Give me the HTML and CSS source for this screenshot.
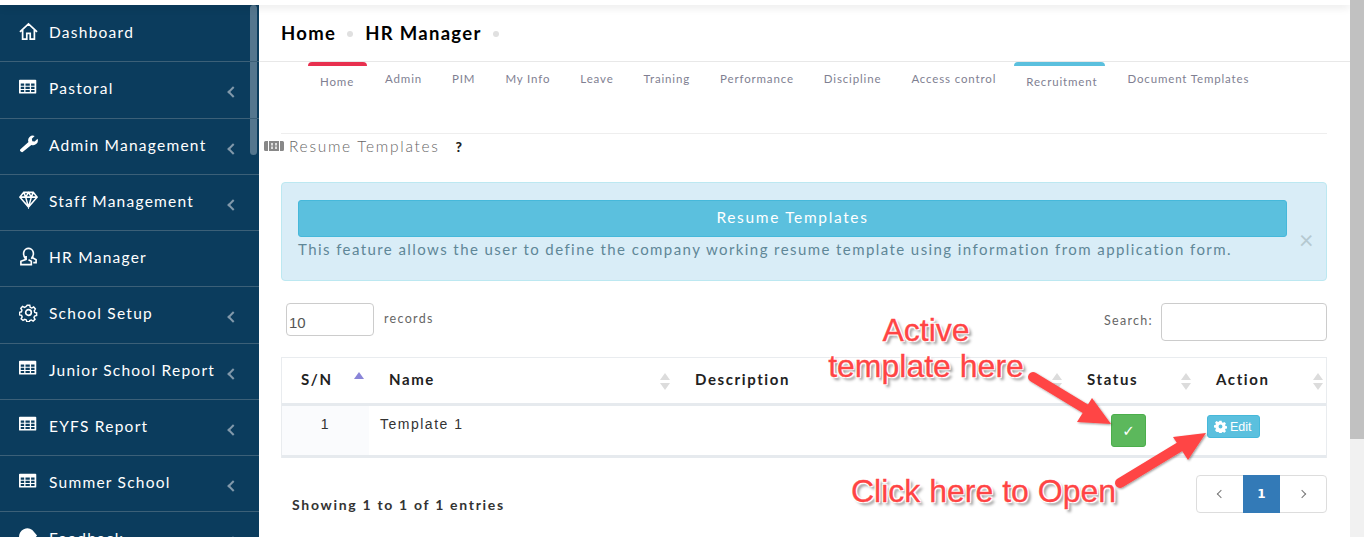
FILE: index.html
```html
<!DOCTYPE html>
<html lang="en">
<head>
<meta charset="utf-8">
<title>Resume Templates</title>
<link rel="stylesheet" href="styles.css">
</head>
<body>
<div class="page">
  <div class="topstrip"></div>
  <aside class="sidebar">
    <div class="thumb"></div>
    <a class="nav-item"><svg class="ico" viewBox="0 0 20 20"><path d="M1 10.500 10 2l9 8.500M3.800 8v10h4.400v-6h3.600v6h4.400V8" fill="none" stroke="#fff" stroke-width="1.800"/></svg><span>Dashboard</span></a>
    <a class="nav-item"><svg class="ico" viewBox="0 0 22 22"><use href="#grid"/></svg><span>Pastoral</span><i class="chev"></i></a>
    <a class="nav-item"><svg class="ico" viewBox="0 0 20 20"><path d="M2 18.500a1.500 1.500 0 0 1-.5-2.500l8.500-7.500a5 5 0 0 1 6.500-6.500l-3 3 .5 2.500 2.500.5 3-3a5 5 0 0 1-6.500 6.500L4.500 18.500a1.700 1.700 0 0 1-2.500 0z" fill="#fff"/></svg><span>Admin Management</span><i class="chev"></i></a>
    <a class="nav-item"><svg class="ico" viewBox="0 0 20 20"><path d="M5 2.500h10l4 5-9 10.500L1 7.500zM1 7.500h18M7 7.500 10 18l3-10.500M5 2.500l2 5 3-5 3 5 2-5" fill="none" stroke="#fff" stroke-width="1.600"/></svg><span>Staff Management</span><i class="chev"></i></a>
    <a class="nav-item"><svg class="ico" viewBox="0 0 20 20"><path d="M7 12.500C5 10 4.500 8 5 5.500 5.500 3 8 1.500 10 1.500s4.500 1.500 5 4c.5 2.500 0 4.500-2 7M7.500 9.500v3.500L2 15v3.500h11V15l-3-1.500M13 10.500l5 3v3h-3" fill="none" stroke="#fff" stroke-width="1.700"/></svg><span>HR Manager</span></a>
    <a class="nav-item"><svg class="ico" viewBox="0 0 20 20"><circle cx="10" cy="10" r="3" fill="none" stroke="#fff" stroke-width="1.700"/><path d="M8.500 1.500h3l.5 2.500 1.700.8 2.300-1.200 2 2.200-1.300 2.200.6 1.900 2.200.6v3l-2.400.6-.7 1.700 1.200 2.200-2.200 2-2.100-1.300-1.800.7-.5 1.500h-3l-.5-2.200-1.800-.7-2.100 1.300-2.200-2 1.200-2.200-.7-1.700-2.400-.6v-3l2.200-.6.600-1.900-1.300-2.200 2-2.200 2.300 1.200 1.700-.8z" transform="translate(1 1) scale(.9)" fill="none" stroke="#fff" stroke-width="1.700"/></svg><span>School Setup</span><i class="chev"></i></a>
    <a class="nav-item"><svg class="ico" viewBox="0 0 22 22"><use href="#grid"/></svg><span>Junior School Report</span><i class="chev"></i></a>
    <a class="nav-item"><svg class="ico" viewBox="0 0 22 22"><use href="#grid"/></svg><span>EYFS Report</span><i class="chev"></i></a>
    <a class="nav-item"><svg class="ico" viewBox="0 0 22 22"><use href="#grid"/></svg><span>Summer School</span><i class="chev"></i></a>
    <a class="nav-item"><svg class="ico" viewBox="0 0 20 20"><path d="M0 9a9 9 0 0 1 14-7l5 6-5 6H8A8 8 0 0 1 0 9z" fill="#fff"/></svg><span>Feedback</span><i class="chev"></i></a>
  </aside>

  <main class="main">
    <header class="crumbs">
      <span>Home</span><i class="dot"></i><span>HR Manager</span><i class="dot"></i>
    </header>
    <nav class="tabs">
      <a class="tab active red">Home</a>
      <a class="tab">Admin</a>
      <a class="tab">PIM</a>
      <a class="tab">My Info</a>
      <a class="tab">Leave</a>
      <a class="tab">Training</a>
      <a class="tab">Performance</a>
      <a class="tab">Discipline</a>
      <a class="tab">Access control</a>
      <a class="tab active blue">Recruitment</a>
      <a class="tab">Document Templates</a>
    </nav>
    <div class="content">
      <div class="title-row">
        <svg class="title-ico" viewBox="0 0 20 12"><path d="M1.500 1H4v10H1.500A1.500 1.500 0 0 1 0 9.500v-7A1.500 1.500 0 0 1 1.500 1zM16 1h2.500A1.500 1.500 0 0 1 20 2.500v7a1.500 1.500 0 0 1-1.500 1.500H16zM5 1h10v10H5z" fill="#888"/><path d="M7 3h2v2.500H7zM11 3h2v2.500h-2zM7 6.500h2V9H7zM11 6.500h2V9h-2z" fill="#ddd"/></svg>
        <span class="title">Resume Templates</span>
        <b class="help">?</b>
      </div>
      <section class="alert">
        <div class="alert-body">
          <div class="alert-head">Resume Templates</div>
          <p class="alert-text">This feature allows the user to define the company working resume template using information from application form.</p>
        </div>
        <span class="close">×</span>
      </section>
      <div class="controls">
        <div class="len"><input class="len-input" value="10"><label>records</label></div>
        <div class="search"><label>Search:</label><input class="search-input"></div>
      </div>
      <div class="table">
        <div class="row head">
          <div class="c sn"><b>S/N</b><i class="sort asc"></i></div>
          <div class="c name"><b>Name</b><i class="sort"></i></div>
          <div class="c desc"><b>Description</b><i class="sort"></i></div>
          <div class="c status"><b>Status</b><i class="sort"></i></div>
          <div class="c action"><b>Action</b><i class="sort"></i></div>
        </div>
        <div class="row body">
          <div class="c sn">1</div>
          <div class="c name">Template 1</div>
          <div class="c desc"></div>
          <div class="c status"><a class="btn-ok">✓</a></div>
          <div class="c action"><a class="btn-edit"><svg viewBox="0 0 20 20"><path d="M8.300 1h3.400l.5 2.600 1.500.7 2.300-1.400 2.400 2.400-1.400 2.300.7 1.500 2.300.5v3.400l-2.300.5-.7 1.500 1.400 2.300-2.400 2.400-2.300-1.400-1.500.7-.5 2.300H8.300l-.5-2.300-1.500-.7L4 18.300l-2.400-2.400L3 13.600l-.7-1.500-2.300-.5V8.200l2.300-.5.700-1.500L1.600 3.900 4 1.500l2.300 1.400 1.500-.7zM10 7a3 3 0 1 0 0 6 3 3 0 0 0 0-6z" fill="#fff" fill-rule="evenodd"/></svg>Edit</a></div>
        </div>
      </div>
      <div class="foot">
        <b class="info">Showing 1 to 1 of 1 entries</b>
        <div class="pager"><a><i class="pg prev"></i></a><a class="on">1</a><a><i class="pg next"></i></a></div>
      </div>
    </div>

    <div class="note note-active">Active<br>template here</div>
    <div class="note note-open">Click here to Open</div>
    <svg class="arrows" viewBox="0 0 1364 537" width="1364" height="537">
      <defs>
        <filter id="sh" x="-20%" y="-20%" width="140%" height="140%"><feDropShadow dx="1" dy="1" stdDeviation="1.200" flood-color="#000" flood-opacity=".4"/></filter>
      </defs>
      <g filter="url(#sh)">
        <path d="M1033 377 1094 414" stroke="#ff4444" stroke-width="10" stroke-linecap="round"/>
        <path d="M1111 424 1077 422 1092 398z" fill="#ff4444"/>
        <path d="M1120 483 1186 443" stroke="#ff4444" stroke-width="10" stroke-linecap="round"/>
        <path d="M1206 433 1173 437 1188 460z" fill="#ff4444"/>
      </g>
    </svg>
  </main>
  <div class="vbar"><div class="vthumb"></div></div>
</div>
<svg width="0" height="0" class="defs"><defs><g id="grid"><path fill-rule="evenodd" d="M1 2h18a1 1 0 0 1 1 1v14a1 1 0 0 1-1 1H1a1 1 0 0 1-1-1V3a1 1 0 0 1 1-1zM2 6.500V9h4V6.500zM7.500 6.500V9h5V6.500zM14 6.500V9h4V6.500zM2 10.200v2.400h4v-2.400zM7.500 10.200v2.400h5v-2.400zM14 10.200v2.400h4v-2.400zM2 13.800v2.400h4v-2.400zM7.500 13.800v2.400h5v-2.400zM14 13.800v2.400h4v-2.400z" fill="#fff"/></g></defs></svg>
</body>
</html>
```
FILE: styles.css
```css
* { box-sizing: border-box; }
html, body { margin: 0; height: 100%; overflow: hidden; background: #fff; }
body { font-family: "Lato", "Liberation Sans", sans-serif; color: #333; }
.defs { position: absolute; }
.page { position: relative; display: flex; height: 537px; width: 1364px; overflow: hidden; }
.topstrip { position: absolute; left: 0; right: 14px; top: 0; height: 5px; background: #fff; box-shadow: 0 2px 8px rgba(0,0,0,.12); z-index: 3; }
.sidebar { position: relative; width: 259px; flex: none; background: #0b3c5d; margin-top: 5px; height: 532px; padding-top: 1px; overflow: hidden; }
.thumb { position: absolute; right: 2px; top: 0; width: 7px; height: 150px; border-radius: 4px; background: rgba(255,255,255,.3); }
.nav-item { display: flex; align-items: center; height: 56.25px; padding: 0 28px 0 19px; color: #fff; font-size: 15.500px; letter-spacing: 1.25px; border-bottom: 1px solid #3c6078; position: relative; white-space: nowrap; }
.nav-item span { margin-left: 11px; margin-top: -3px; }
.ico { width: 19px; height: 19px; flex: none; margin-top: -5px; }
.chev { position: absolute; left: 229px; top: 26px; width: 8px; height: 8px; border-left: 2px solid #8299ab; border-bottom: 2px solid #8299ab; transform: rotate(45deg); }
.main { position: relative; flex: 1; min-width: 0; padding-top: 5px; }
.crumbs { display: flex; align-items: center; height: 57px; padding: 0 0 0 22px; font-weight: 700; font-size: 18.500px; letter-spacing: 1.3px; color: #000; border-bottom: 1px solid #e8e8e8; width: 1091px; }
.dot { width: 6px; height: 6px; border-radius: 50%; background: #e0e0e0; margin: 2px 12px 0 11px; }
.tabs { display: flex; padding-left: 49px; height: 71px; width: 1069px; }
.tab { padding: 10px 15px 0; font-size: 11.500px; letter-spacing: .85px; color: #7f7f92; white-space: nowrap; position: relative; height: 40px; }
.tab.active { padding-top: 13px; padding-left: 12px; padding-right: 13px; margin: 0 3px 0 0; }
.tab.blue { margin: 0 7px 0 3px; padding-right: 8px; }
.tab.active::before { content: ""; position: absolute; left: 0; right: 0; top: 0; height: 4px; border-radius: 5px 5px 0 0; }
.tab.red::before { background: #e8304f; }
.tab.blue::before { background: #5bc0de; }
.content { margin-left: 22px; width: 1046px; border-top: 1px solid #eee; position: relative; }
.title-row { display: flex; align-items: center; height: 24px; margin-left: -17px; }
.title-ico { width: 20px; height: 12px; flex: none; }
.title { margin-left: 5px; font-size: 15.500px; font-weight: 300; letter-spacing: 1.7px; color: #666; }
.help { margin-left: 16px; font-size: 14px; font-weight: 900; color: #222; }
.alert { margin-top: 24px; height: 99px; background: #d9edf7; border: 1px solid #bce8f1; border-radius: 4px; padding: 17px 16px 0; display: flex; }
.alert-body { width: 989px; flex: none; }
.alert-head { height: 37px; padding-bottom: 3px; background: #5bc0de; border: 1px solid #46b8da; border-radius: 3px; color: #fff; font-size: 15.500px; letter-spacing: 1.65px; display: flex; align-items: center; justify-content: center; }
.alert-text { margin: 3px 0 0; font-size: 15px; letter-spacing: 1.42px; color: #5f8797; white-space: nowrap; }
.close { font-size: 25px; color: #b5c9d1; margin: 27px 0 0 12px; line-height: 1; }
.controls { display: flex; justify-content: space-between; margin-top: 22px; height: 54px; }
.len { display: flex; padding-left: 5px; align-items: flex-start; }
.len-input { width: 88px; height: 33px; border: 1px solid #ccc; border-radius: 4px; padding: 6px 2px 0; font-family: "Liberation Sans", sans-serif; font-size: 15px; color: #555; }
.len label { margin: 8px 0 0 10px; font-size: 12.500px; letter-spacing: 1.3px; color: #666; }
.search { display: flex; align-items: flex-start; }
.search label { margin: 10px 8px 0 0; font-size: 12.500px; letter-spacing: 1.3px; color: #666; }
.search-input { width: 166px; height: 38px; border: 1px solid #ccc; border-radius: 4px; }
.table { border: 1px solid #e9ecef; border-bottom: 0; }
.row { display: grid; grid-template-columns: 87px 304px 392px 129px 1fr; }
.row.head { height: 48px; border-bottom: 3px solid #e6eaee; font-size: 15px; letter-spacing: 1.6px; color: #222; }
.row.body { height: 52px; border-bottom: 3px solid #e6eaee; font-family: "Liberation Sans", sans-serif; font-size: 14px; letter-spacing: 1.500px; color: #333; }
.head .c { position: relative; padding-top: 12px; }
.head .sn { padding-left: 19px; }
.head .name { padding-left: 20px; }
.head .desc { padding-left: 22px; }
.head .status { padding-left: 22px; }
.head .action { padding-left: 22px; }
.sort { position: absolute; top: 15px; right: 3px; width: 10px; height: 17px; }
.sort::before, .sort::after { content: ""; position: absolute; left: 0; border-left: 5px solid transparent; border-right: 5px solid transparent; }
.sort::before { top: 0; border-bottom: 7px solid #dcdcdc; }
.sort::after { bottom: 0; border-top: 7px solid #dcdcdc; }
.sort.asc { top: 14px; right: 5px; }
.sort.asc::before { border-bottom-color: #8a85d8; }
.sort.asc::after { display: none; }
.body .sn { background: #fafbfd; text-align: center; padding-top: 10px; }
.body .name { padding: 10px 0 0 11px; }
.body .status { padding: 8px 0 0 46px; }
.body .action { padding: 9px 0 0 13px; }
.btn-ok { display: flex; align-items: center; justify-content: center; width: 35px; height: 33px; background: #5cb85c; border: 1px solid #4cae4c; border-radius: 3px; color: #fff; font-family: "DejaVu Sans", sans-serif; font-weight: 700; font-size: 15px; letter-spacing: 0; }
.btn-edit { display: inline-flex; align-items: center; gap: 3px; height: 23px; width: 53px; padding-left: 6px; background: #5bc0de; border: 1px solid #46b8da; border-radius: 3px; color: #fff; font-size: 12.500px; letter-spacing: 0; }
.btn-edit svg { width: 13px; height: 13px; }
.foot { display: flex; justify-content: space-between; margin-top: 17px; }
.info { margin: 21px 0 0 11px; font-size: 14px; letter-spacing: 1.7px; color: #333; }
.pager { display: flex; width: 131px; height: 38px; border: 1px solid #ddd; border-radius: 4px; }
.pager a { flex: 1; display: flex; align-items: center; justify-content: center; }
.pager a.on { flex: none; width: 37px; background: #337ab7; color: #fff; font-family: "DejaVu Sans", sans-serif; font-size: 12px; font-weight: 700; margin: -1px 0; }
.pg { width: 6px; height: 6px; border-left: 1.500px solid #777; border-bottom: 1.500px solid #777; }
.pg.prev { transform: translateX(1px) rotate(45deg); }
.pg.next { transform: translateX(-1px) rotate(225deg); }
.note { position: absolute; font-family: "Liberation Sans", sans-serif; color: #ff4444; font-size: 32px; line-height: 36px; text-align: center; -webkit-text-stroke: .3px #ff4444; text-shadow: 0 0 2px #fff, 0 0 2px #fff, 0 0 3px #fff, 1px 1px 0 #fff, -1px -1px 0 #fff, 1px -1px 0 #fff, -1px 1px 0 #fff, 3px 3px 3px rgba(0,0,0,.45); white-space: nowrap; z-index: 5; }
.note-active { left: 568px; top: 312px; width: 198px; }
.note-open { left: 592px; top: 473px; }
.arrows { position: absolute; left: -259px; top: 0; pointer-events: none; z-index: 4; }
.vbar { width: 14px; flex: none; background: #f1f1f1; position: absolute; right: 0; top: 0; bottom: 0; z-index: 6; }
.vthumb { height: 439px; background: #c1c1c1; }
```
